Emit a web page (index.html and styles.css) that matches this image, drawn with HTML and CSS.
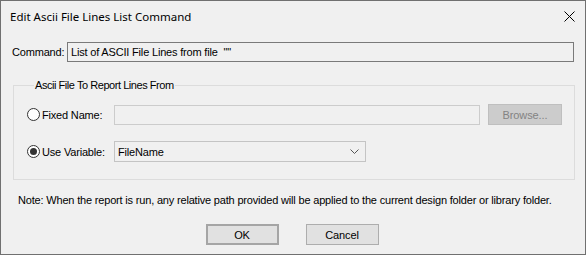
FILE: index.html
```html
<!DOCTYPE html>
<html lang="en">
<head>
    <meta charset="UTF-8">
    <title>Edit Ascii File Lines List Command</title>
    <link rel="stylesheet" href="styles.css">
</head>
<body>
    <div class="window">
        <div class="titlebar">
            <span class="title">Edit Ascii File Lines List Command</span>
            <svg class="close" width="11" height="11" viewBox="0 0 11 11">
                <path d="M0.5 0.5 L10.5 10.5 M10.5 0.5 L0.5 10.5" stroke="#000" stroke-width="1" fill="none"/>
            </svg>
        </div>

        <div class="command-row">
            <label class="command-label">Command:</label>
            <div class="command-box">List of ASCII File Lines from file&nbsp; &quot;&quot;</div>
        </div>

        <fieldset class="group">
            <legend>Ascii File To Report Lines From</legend>
            <div class="row row-fixed">
                <label class="radio-label"><input type="radio" name="src" class="radio"> Fixed Name:</label>
                <div class="textbox disabled"></div>
                <button type="button" class="btn btn-browse" disabled>Browse...</button>
            </div>
            <div class="row row-var">
                <label class="radio-label"><input type="radio" name="src" class="radio" checked> Use Variable:</label>
                <div class="combo">
                    <span>FileName</span>
                    <svg width="9" height="5" viewBox="0 0 9 5">
                        <path d="M0.5 0.5 L4.5 4.5 L8.5 0.5" stroke="#555" stroke-width="1" fill="none"/>
                    </svg>
                </div>
            </div>
        </fieldset>

        <p class="note">Note: When the report is run, any relative path provided will be applied to the current design folder or library folder.</p>

        <div class="buttons">
            <button type="button" class="btn btn-ok">OK</button>
            <button type="button" class="btn btn-cancel">Cancel</button>
        </div>
    </div>
</body>
</html>
```

FILE: styles.css
```css
body {
    margin: 0;
    padding: 0;
    font-family: "Liberation Sans", Arial, sans-serif;
    font-size: 11px;
    letter-spacing: -0.18px;
    color: #000;
    background-color: #f0f0f0;
}

.window {
    width: 586px;
    height: 255px;
    box-sizing: border-box;
    border: 1px solid #707070;
    background-color: #f0f0f0;
}

.titlebar {
    height: 30px;
    display: flex;
    align-items: center;
    justify-content: space-between;
    padding: 0 9px 0 9px;
}

.title {
    font-family: "Noto Sans", sans-serif;
    font-size: 11.5px;
    letter-spacing: 0;
}

.close {
    margin-right: 1px;
}

.command-row {
    display: flex;
    align-items: center;
    margin-top: 11px;
    padding-left: 11px;
}

.command-label {
    width: 55px;
}

.command-box {
    width: 507px;
    height: 20px;
    box-sizing: border-box;
    border: 1px solid #7a7a7a;
    padding: 0 3px;
    line-height: 18px;
}

.group {
    margin: 16px 0 0 12px;
    width: 562px;
    height: 102px;
    box-sizing: border-box;
    border: 1px solid #dcdcdc;
    padding: 0 0 0 13px;
}

.group legend {
    padding: 0 1px;
    margin-left: 7px;
    line-height: 14px;
    letter-spacing: -0.45px;
}

.row {
    display: flex;
    align-items: center;
}

.row-fixed {
    margin-top: 12px;
}

.row-var {
    margin-top: 16px;
}

.radio-label {
    width: 87px;
    display: flex;
    align-items: center;
}

.radio {
    appearance: none;
    -webkit-appearance: none;
    width: 13px;
    height: 13px;
    margin: 0 2px 0 0;
    border: 1px solid #333;
    border-radius: 50%;
    box-sizing: border-box;
    background-color: #fff;
    display: flex;
    align-items: center;
    justify-content: center;
}

.radio:checked::after {
    content: "";
    width: 7px;
    height: 7px;
    border-radius: 50%;
    background-color: #333;
}

.textbox {
    width: 366px;
    height: 20px;
    box-sizing: border-box;
    border: 1px solid #cccccc;
}

.btn {
    font-family: "Liberation Sans", Arial, sans-serif;
    font-size: 11px;
    letter-spacing: -0.1px;
    color: #000;
    background-color: #e1e1e1;
    border: 1px solid #adadad;
    height: 21px;
    padding: 0;
}

.btn-browse {
    margin-left: 8px;
    width: 74px;
    background-color: #cccccc;
    border-color: #bfbfbf;
    color: #838383;
}

.combo {
    width: 252px;
    height: 21px;
    box-sizing: border-box;
    border: 1px solid #c4c4c4;
    display: flex;
    align-items: center;
    justify-content: space-between;
    padding: 0 6px 0 3px;
}

.note {
    margin: 14px 0 0 17px;
    line-height: 13px;
}

.buttons {
    display: flex;
    justify-content: center;
    gap: 27px;
    margin-top: 17px;
    padding-right: 2px;
}

.btn-ok {
    width: 73px;
    border: 2px solid #a5a5a5;
}

.btn-cancel {
    width: 73px;
}
```
